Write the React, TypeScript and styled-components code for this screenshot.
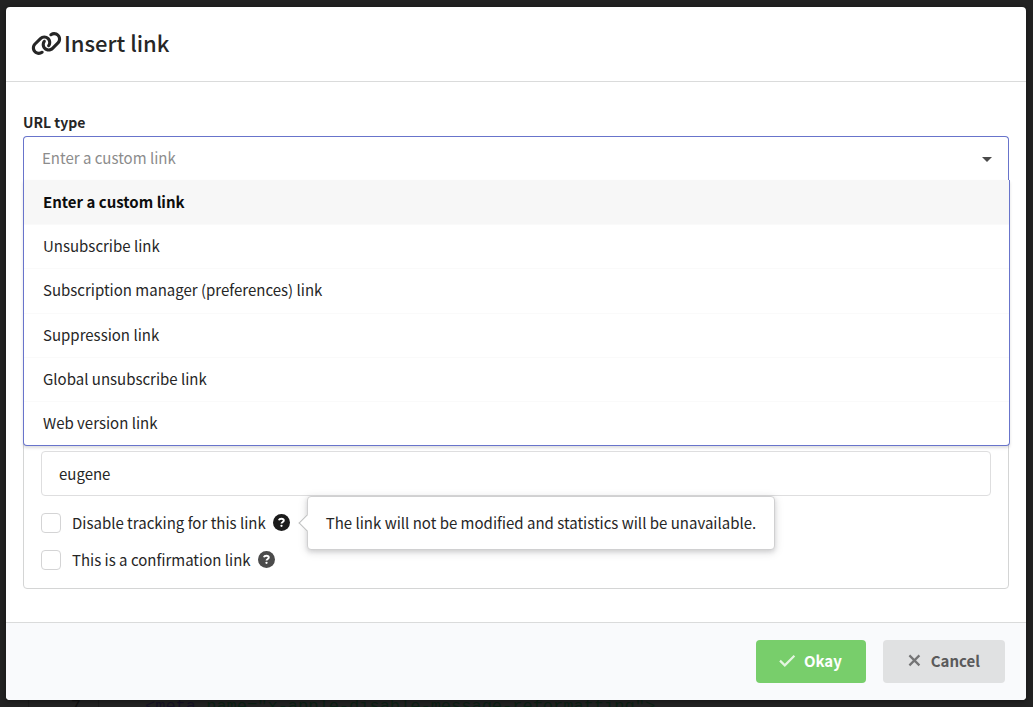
import React, { useState } from "react";
import styled, { createGlobalStyle } from "styled-components";
import { FaLink } from "react-icons/fa6";

const GlobalStyle = createGlobalStyle`
  *, *::before, *::after { box-sizing: border-box; }
  body {
    margin: 0;
    background: #222222;
    color: #262626;
    font: 15px/24px "Noto Sans CJK SC", "Source Sans Pro", sans-serif;
  }
  button, input, select { font: inherit; color: inherit; margin: 0; }
`;

const Screen = styled.div`
  position: relative;
  min-height: 100vh;
  padding: 7px 7px 7px 6px;
  overflow: hidden;
`;

const CodeLine = styled.code`
  position: absolute;
  left: 28px;
  bottom: -11px;
  right: 0;
  display: flex;
  font: 17px/22px "Liberation Mono", monospace;
  white-space: pre;
  color: #0c2114;
`;

const LineNumber = styled.span`
  width: 71px;
  padding-right: 17px;
  border-right: 1px solid #1c1c1c;
  border-left: 1px solid #1c1c1c;
  text-align: right;
  color: #111111;
  margin-right: 46px;
`;

const Tag = styled.span`
  color: #171226;
`;

const Dialog = styled.section`
  position: relative;
  background: #ffffff;
  border-radius: 4px;
  box-shadow: 0 1px 4px 1px rgba(0, 0, 0, 0.3);
`;

const Header = styled.header`
  display: flex;
  align-items: center;
  gap: 2px;
  height: 75px;
  padding: 0 25px 2px;
  border-bottom: 1px solid #dadbdb;
`;

const Title = styled.h1`
  margin: 0;
  padding-bottom: 2px;
  font-size: 22px;
  line-height: 32px;
  font-weight: 500;
`;

const Body = styled.div`
  padding: 30px 17px 33px;
`;

const FieldLabel = styled.label`
  display: block;
  margin-bottom: 4px;
  font-size: 14px;
  line-height: 20px;
  font-weight: 700;
`;

const Dropdown = styled.div`
  position: relative;
`;

const Select = styled.select`
  display: block;
  width: 100%;
  height: 45px;
  padding: 0 18px 2px;
  appearance: none;
  background: #ffffff;
  border: 1px solid #6874cb;
  border-bottom: 0;
  border-radius: 4px 4px 0 0;
  color: #8c8c8c;
  outline: none;
`;

const Caret = styled.span`
  position: absolute;
  top: 21px;
  right: 17px;
  border: 5px solid transparent;
  border-top-color: #4a4a4a;
  border-bottom: 0;
  pointer-events: none;
`;

const Menu = styled.ul`
  position: absolute;
  z-index: 2;
  top: 44px;
  left: 0;
  right: -1px;
  display: grid;
  grid-auto-rows: 1fr;
  height: 266px;
  margin: 0;
  padding: 0;
  list-style: none;
  background: #ffffff;
  border: 1px solid #6874cb;
  border-top: 0;
  border-radius: 0 0 4px 4px;
  box-shadow: 0 2px 3px rgba(34, 36, 38, 0.15);
`;

const MenuItem = styled.li<{ $active: boolean }>`
  display: flex;
  align-items: center;
  padding: 0 19px 1px;
  cursor: pointer;
  background: ${(p) => (p.$active ? "#f7f7f7" : "transparent")};
  color: ${(p) => (p.$active ? "#0d0d0d" : "inherit")};
  font-weight: ${(p) => (p.$active ? 700 : 400)};

  & + & {
    border-top: 1px solid #fafafa;
  }
`;

const Panel = styled.div`
  display: flex;
  flex-direction: column;
  justify-content: flex-end;
  min-height: 391px;
  margin-top: 17px;
  padding: 17px 17px 15px;
  border: 1px solid #d4d5d5;
  border-radius: 4px;
`;

const TextInput = styled.input`
  width: 100%;
  height: 45px;
  padding: 0 17px;
  margin-bottom: 13px;
  background: #ffffff;
  border: 1px solid #dededf;
  border-radius: 4px;
  outline: none;
`;

const CheckRow = styled.div`
  display: flex;
  align-items: center;
  height: 27px;

  & + & {
    margin-top: 10px;
  }
`;

const CheckLabel = styled.label`
  display: flex;
  align-items: center;
  gap: 11px;
`;

const Checkbox = styled.input`
  appearance: none;
  width: 20px;
  height: 20px;
  border: 1px solid #d4d4d5;
  border-radius: 4px;
  background: #ffffff;

  &:checked {
    background: #4a4a4a;
  }
`;

const Help = styled.button<{ $active?: boolean }>`
  position: relative;
  display: flex;
  margin-left: 7px;
  padding: 0;
  border: 0;
  background: none;
  color: ${(p) => (p.$active ? "#1b1b1b" : "#4b4b4b")};
`;

const Tooltip = styled.span`
  position: absolute;
  z-index: 1;
  top: 50%;
  left: calc(100% + 17px);
  transform: translateY(-50%);
  padding: 14px 18px;
  border: 1px solid #d0d0d1;
  border-radius: 4px;
  background: #ffffff;
  box-shadow: 0 2px 4px rgba(34, 36, 38, 0.12), 0 2px 10px rgba(34, 36, 38, 0.15);
  color: #262626;
  white-space: nowrap;

  &::before {
    content: "";
    position: absolute;
    top: calc(50% - 6px);
    left: -7px;
    width: 12px;
    height: 12px;
    background: #ffffff;
    border: solid #bebfbf;
    border-width: 0 0 1px 1px;
    transform: rotate(45deg);
  }
`;

const Footer = styled.footer`
  display: flex;
  justify-content: flex-end;
  gap: 17px;
  padding: 17px 21px;
  background: #f9fafc;
  border-top: 1px solid #dadbdb;
  border-radius: 0 0 4px 4px;
`;

const Action = styled.button<{ $primary?: boolean }>`
  display: flex;
  align-items: center;
  justify-content: center;
  gap: 8px;
  height: 43px;
  padding: 0 ${(p) => (p.$primary ? 24 : 25)}px 1px 22px;
  border: 0;
  border-radius: 4px;
  background: ${(p) => (p.$primary ? "#78ce6b" : "#e0e1e2")};
  color: ${(p) => (p.$primary ? "#ffffff" : "#5a5a5b")};
  font-size: 15px;
  font-weight: 700;
`;

const Glyph = styled.svg`
  width: 18px;
  height: 18px;
  fill: none;
  stroke: currentColor;
  stroke-width: 2.2;
  opacity: 0.8;
`;

const HelpIcon = () => (
  <svg width="17" height="17" viewBox="0 0 17 17" aria-hidden="true">
    <circle cx="8.5" cy="8.5" r="8.5" fill="currentColor" />
    <path
      d="M5.8 6.3C6.2 5.2 7.1 4.7 8.4 4.7c1.5 0 2.4.7 2.4 1.8 0 1.5-2.3 1.5-2.3 3.1"
      fill="none"
      stroke="#ffffff"
      strokeWidth="1.9"
    />
    <circle cx="8.5" cy="11.8" r="1.15" fill="#ffffff" />
  </svg>
);

const urlTypes = [
  "Enter a custom link",
  "Unsubscribe link",
  "Subscription manager (preferences) link",
  "Suppression link",
  "Global unsubscribe link",
  "Web version link",
];

export default function App() {
  const [urlType, setUrlType] = useState(urlTypes[0]);

  return (
    <Screen>
      <GlobalStyle />
      <CodeLine aria-hidden="true">
        <LineNumber>7</LineNumber>
        <Tag>&lt;meta </Tag>
        {'name="x-apple-disable-message-reformatting">'}
      </CodeLine>
      <Dialog role="dialog" aria-labelledby="dialog-title">
        <Header>
          <FaLink size={31} aria-hidden="true" />
          <Title id="dialog-title">Insert link</Title>
        </Header>
        <Body>
          <FieldLabel htmlFor="url-type">URL type</FieldLabel>
          <Dropdown>
            <Select id="url-type" value={urlType} onChange={(e) => setUrlType(e.target.value)}>
              {urlTypes.map((t) => (
                <option key={t}>{t}</option>
              ))}
            </Select>
            <Caret />
            <Menu role="listbox" aria-label="URL type">
              {urlTypes.map((t) => (
                <MenuItem
                  key={t}
                  role="option"
                  aria-selected={t === urlType}
                  $active={t === urlType}
                  onClick={() => setUrlType(t)}
                >
                  {t}
                </MenuItem>
              ))}
            </Menu>
          </Dropdown>
          <Panel>
            <TextInput aria-label="Link name" defaultValue="eugene" />
            <CheckRow>
              <CheckLabel>
                <Checkbox type="checkbox" />
                Disable tracking for this link
              </CheckLabel>
              <Help type="button" $active aria-describedby="tracking-tip">
                <HelpIcon />
                <Tooltip role="tooltip" id="tracking-tip">
                  The link will not be modified and statistics will be unavailable.
                </Tooltip>
              </Help>
            </CheckRow>
            <CheckRow>
              <CheckLabel>
                <Checkbox type="checkbox" />
                This is a confirmation link
              </CheckLabel>
              <Help type="button" aria-label="About confirmation links">
                <HelpIcon />
              </Help>
            </CheckRow>
          </Panel>
        </Body>
        <Footer>
          <Action type="button" $primary>
            <Glyph viewBox="0 0 18 18" aria-hidden="true">
              <path d="M2 8.6l4.8 4.8L16.4 3.8" />
            </Glyph>
            Okay
          </Action>
          <Action type="button">
            <Glyph viewBox="0 0 18 18" aria-hidden="true">
              <path d="M4.4 3.4l10 10M14.4 3.4l-10 10" />
            </Glyph>
            Cancel
          </Action>
        </Footer>
      </Dialog>
    </Screen>
  );
}
